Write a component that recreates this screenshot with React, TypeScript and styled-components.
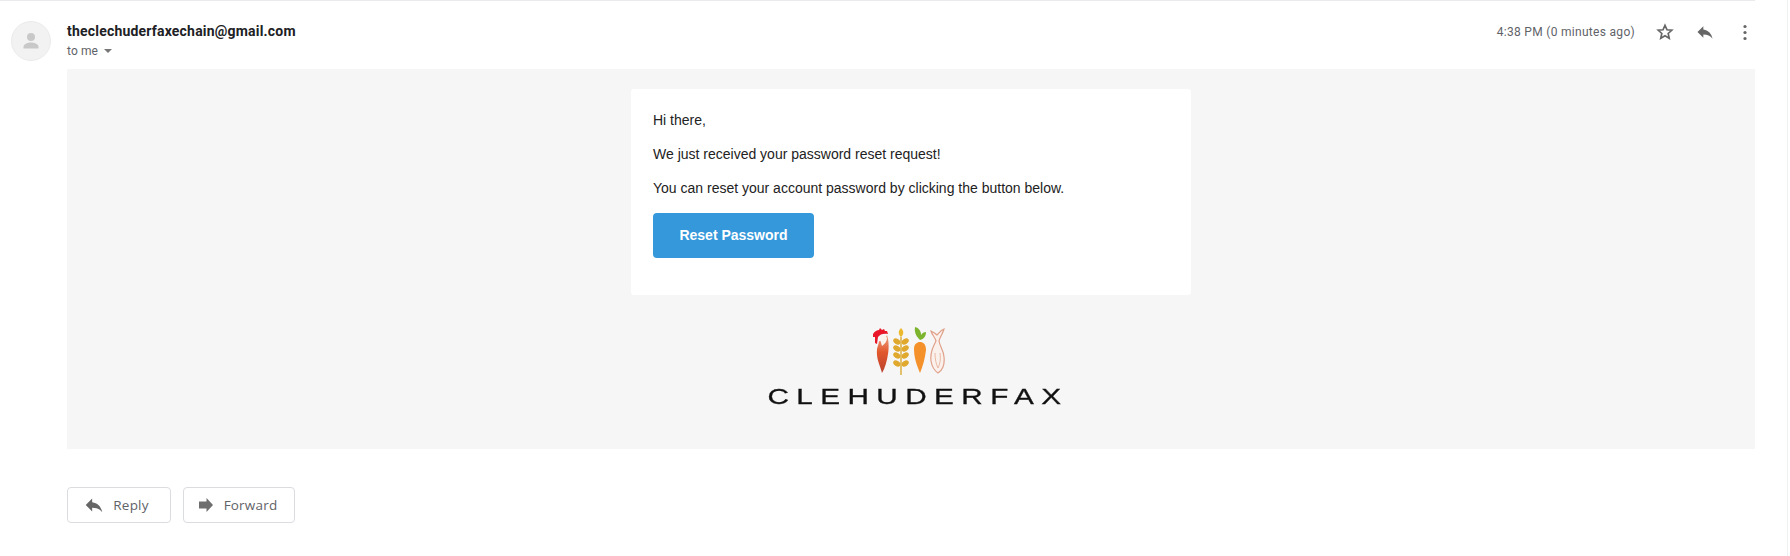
import styled, { createGlobalStyle } from "styled-components"

const GlobalStyle = createGlobalStyle`
  html, body {
    margin: 0;
    padding: 0;
    background: #fff;
  }
`

const Page = styled.div`
  width: 1790px;
  height: 556px;
  overflow: hidden;
  display: flex;
  font-family: Roboto, "Liberation Sans", sans-serif;
`

const Thread = styled.div`
  width: 1755px;
  border-top: 1px solid #e8eaed;
  flex: none;
`

const Gutter = styled.div`
  width: 32px;
  flex: none;
  border-right: 1px solid #eef0f2;
`

const Header = styled.header`
  height: 68px;
  display: flex;
  padding-left: 11px;
  padding-top: 20px;
  box-sizing: border-box;
`

const Avatar = styled.div`
  width: 40px;
  height: 40px;
  box-sizing: border-box;
  border: 1px solid #ebebeb;
  border-radius: 50%;
  background: #f2f2f2;
  display: flex;
  align-items: center;
  justify-content: center;
  flex: none;
`

const Sender = styled.div`
  margin-left: 16px;
  display: flex;
  flex-direction: column;
`

const Name = styled.div`
  font-size: 14px;
  font-weight: 700;
  line-height: 20px;
  letter-spacing: 0.2px;
  color: #202124;
`

const ToLine = styled.div`
  display: flex;
  align-items: center;
  font-size: 12px;
  line-height: 20px;
  letter-spacing: 0.1px;
  color: #5f6368;
`

const Caret = styled.span`
  width: 0;
  height: 0;
  margin-left: 6px;
  border-left: 4px solid transparent;
  border-right: 4px solid transparent;
  border-top: 4px solid #777;
`

const Actions = styled.div`
  margin-left: auto;
  display: flex;
  align-items: center;
  height: 20px;
  margin-top: 1px;
`

const Time = styled.span`
  font-size: 12px;
  letter-spacing: 0.3px;
  color: #5f6368;
  margin-right: 20px;
`

const ActionIcon = styled.span`
  width: 20px;
  height: 20px;
  margin-right: 20px;
  display: flex;
  align-items: center;
  justify-content: center;

  &:last-child {
    margin-right: 0;
  }
`

const Body = styled.div`
  margin-left: 67px;
  height: 380px;
  background: #f6f6f6;
  box-sizing: border-box;
  padding-top: 20px;
  display: flex;
  flex-direction: column;
  align-items: center;
  font-family: "Liberation Sans", Arial, sans-serif;
`

const Card = styled.div`
  width: 560px;
  height: 206px;
  box-sizing: border-box;
  background: #fff;
  border-radius: 3px;
  padding: 23px 22px;
`

const Para = styled.p`
  margin: 0 0 18px;
  font-size: 14px;
  line-height: 16px;
  color: #222;
`

const ResetButton = styled.a`
  display: flex;
  align-items: center;
  justify-content: center;
  width: 161px;
  height: 45px;
  box-sizing: border-box;
  padding-bottom: 2px;
  margin-top: -1px;
  background: #3498db;
  border-radius: 4px;
  color: #fff;
  font-size: 14px;
  font-weight: 700;
`

const Logo = styled.div`
  margin-top: 32px;
  display: flex;
  flex-direction: column;
  align-items: center;
`

const MarkSvg = styled.svg`
  margin-left: -4px;
  filter: blur(0.4px);
`

const Wordmark = styled.div`
  margin-top: 12px;
  margin-left: 13px;
  width: 300px;
  text-align: center;
  font-size: 22px;
  line-height: 20px;
  letter-spacing: 5.5px;
  color: #111;
  white-space: nowrap;
  -webkit-text-stroke: 0.3px #111;
  transform: scaleX(1.35);
`

const Footer = styled.div`
  margin: 38px 0 0 67px;
  display: flex;
  gap: 12px;
`

const FootButton = styled.button<{ $width: number; $trim: number }>`
  width: ${(p) => p.$width}px;
  height: 36px;
  box-sizing: border-box;
  background: #fff;
  border: 1px solid #dadce0;
  border-radius: 4px;
  display: flex;
  align-items: center;
  justify-content: center;
  gap: 8px;
  padding: 0 ${(p) => p.$trim}px 0 0;
  font-family: "Open Sans", Roboto, sans-serif;
  font-size: 13.5px;
  font-weight: 500;
  letter-spacing: 0.2px;
  color: #5f6368;
`

const ReplyIcon = ({ size = 20, color = "#666" }: { size?: number; color?: string }) => (
  <svg width={size} height={size} viewBox="0 0 24 24" fill={color}>
    <path d="M10 9V5l-7 7 7 7v-4.1c5 0 8.5 1.6 11 5.1-1-5-4-10-11-11z" />
  </svg>
)

const ForwardIcon = () => (
  <svg width="18" height="16" viewBox="0 0 18 16" fill="#6e6e6e">
    <path d="M1 4.5h7.5V1L15 8l-6.5 7v-3.5H1z" />
  </svg>
)

const StarIcon = () => (
  <svg width="22" height="22" viewBox="0 0 24 24" fill="none" stroke="#666" strokeWidth="2">
    <path d="M12 4l2.4 5.3 5.8.6-4.4 3.9 1.3 5.7L12 16.6l-5.1 2.9 1.3-5.7-4.4-3.9 5.8-.6z" />
  </svg>
)

const MoreIcon = () => (
  <svg width="20" height="20" viewBox="0 0 20 20" fill="#666">
    <circle cx="10" cy="4.5" r="1.6" />
    <circle cx="10" cy="10.5" r="1.6" />
    <circle cx="10" cy="16.5" r="1.6" />
  </svg>
)

const PersonIcon = () => (
  <svg width="24" height="24" viewBox="0 0 24 24" fill="#c8c8c8">
    <circle cx="12" cy="8" r="4" />
    <path d="M4.5 19.5v-1.8c0-2.8 5-4.2 7.5-4.2s7.5 1.4 7.5 4.2v1.8z" />
  </svg>
)

const wheatRows = [13, 20, 27, 35]

const LogoMark = () => (
  <MarkSvg width="72" height="48" viewBox="0 0 72 48">
    <defs>
      <linearGradient id="rooster" x1="0" y1="0" x2="0" y2="1">
        <stop offset="0" stopColor="#eca184" />
        <stop offset="0.45" stopColor="#e2582c" />
        <stop offset="1" stopColor="#b9402f" />
      </linearGradient>
    </defs>
    {/* rooster */}
    <path d="M4 22C5 18 6 16 6 14c3 1 6-2 8-6 2 6 2 14 1 19-1 7-3 14-6 19-2-8-6-14-5-24z" fill="url(#rooster)" />
    <path d="M8 9c3-1 5 0 6 2 0 3-2 6-5 8-1-3-2-6-1-10z" fill="#fbf3ee" />
    <path d="M0 7c2-3 4-4 6-4l1-2 2 2 2-1 1 2 2 0 1 3c-4-1-8 0-10 3l-1 7-2-1 0-6-3 0z" fill="#e8182a" />
    {/* wheat */}
    <rect x="27.2" y="10" width="1.6" height="38" fill="#dcb24a" />
    <path d="M28 1c3 3 3 6 0 9-3-3-3-6 0-9z" fill="#ebb92b" />
    {wheatRows.map((y) => (
      <g key={y} fill="#e0a82c">
        <ellipse cx="23.8" cy={y + 1.5} rx="3.9" ry="2.6" transform={`rotate(35 23.8 ${y + 1.5})`} />
        <ellipse cx="32.2" cy={y + 1.5} rx="3.9" ry="2.6" transform={`rotate(-35 32.2 ${y + 1.5})`} />
      </g>
    ))}
    {/* carrot */}
    <path d="M47 13c-3-3-6-7-5-13 4 1 6 4 6 8 1-2 3-3 5-3 0 4-2 7-6 8z" fill="#7cb42e" />
    <path d="M41 22c0-5 3-7 6-7s6 2 6 8c-1 8-3 16-6 23-3-7-6-15-6-24z" fill="#f4912a" />
    {/* fish */}
    <path
      d="M58 4c1 4 4 6 5 10-3 6-6 12-5 20 1 6 4 10 7 12 4-2 7-8 6-16 0-6-4-10-5-16 1-4 4-8 5-12-3 1-5 4-7 6-2-2-4-3-6-4z"
      fill="#fbf1ec"
      stroke="#e0a08a"
      strokeWidth="1.2"
    />
    <path d="M62 26c0 6 1 11 3 15 2-4 3-9 2-15" fill="none" stroke="#eab9a5" strokeWidth="1" />
  </MarkSvg>
)

const App = () => {
  return (
    <Page>
      <GlobalStyle />
      <Thread>
        <Header>
          <Avatar>
            <PersonIcon />
          </Avatar>
          <Sender>
            <Name>theclechuderfaxechain@gmail.com</Name>
            <ToLine>
              to me
              <Caret />
            </ToLine>
          </Sender>
          <Actions>
            <Time>4:38 PM (0 minutes ago)</Time>
            <ActionIcon>
              <StarIcon />
            </ActionIcon>
            <ActionIcon>
              <ReplyIcon />
            </ActionIcon>
            <ActionIcon>
              <MoreIcon />
            </ActionIcon>
          </Actions>
        </Header>
        <Body>
          <Card>
            <Para>Hi there,</Para>
            <Para>We just received your password reset request!</Para>
            <Para>You can reset your account password by clicking the button below.</Para>
            <ResetButton>Reset Password</ResetButton>
          </Card>
          <Logo>
            <LogoMark />
            <Wordmark>CLEHUDERFAX</Wordmark>
          </Logo>
        </Body>
        <Footer>
          <FootButton $width={104} $trim={6}>
            <ReplyIcon size={22} />
            Reply
          </FootButton>
          <FootButton $width={112} $trim={3}>
            <ForwardIcon />
            Forward
          </FootButton>
        </Footer>
      </Thread>
      <Gutter />
    </Page>
  )
}

export default App
